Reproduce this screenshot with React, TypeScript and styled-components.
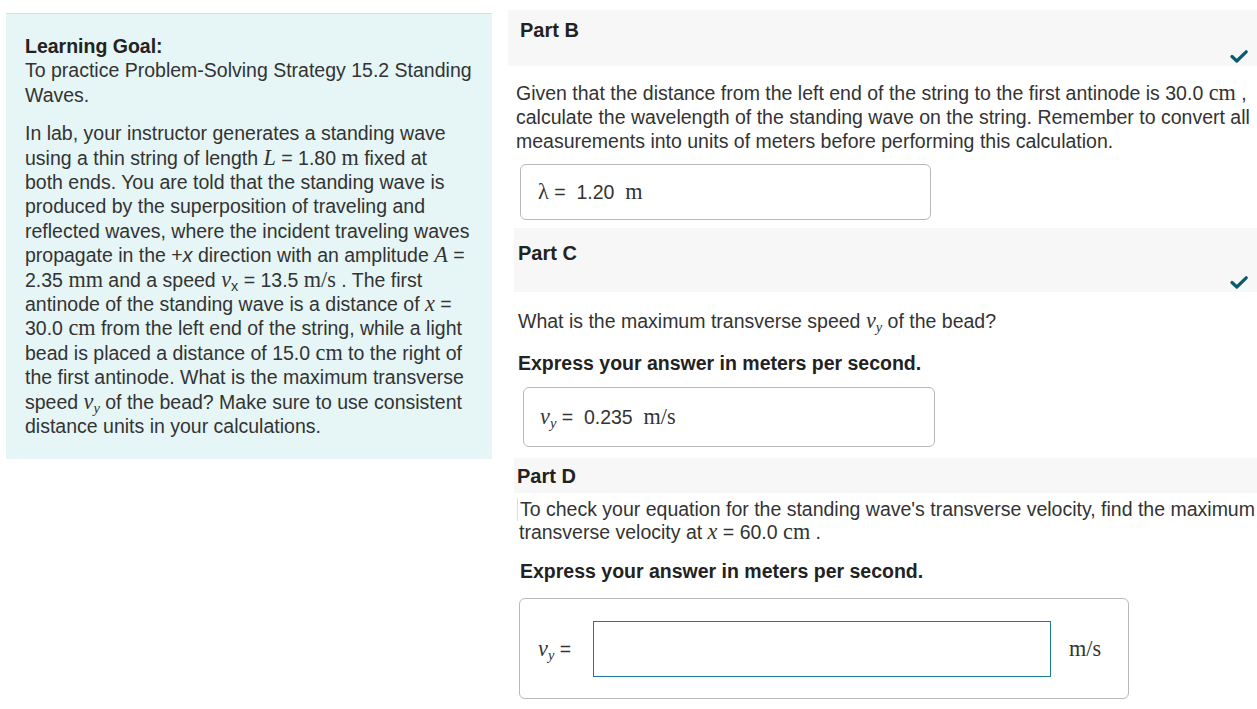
import React from 'react'
import styled, { createGlobalStyle } from 'styled-components'

const GlobalStyle = createGlobalStyle`
  body {
    margin: 0;
    background: #fff;
    font-family: "Liberation Sans", Arial, sans-serif;
    color: #333;
  }
`

const Page = styled.div`
  display: flex;
  align-items: flex-start;
  width: 1257px;
  height: 709px;
  overflow: hidden;
`

const GoalPanel = styled.div`
  margin: 13px 0 0 6px;
  width: 486px;
  flex-shrink: 0;
  box-sizing: border-box;
  padding: 20px 10px 20px 19px;
  background: #e6f5f6;
  border-top: 1px solid #dcdcdc;
  font-size: 19.5px;
  line-height: 24.4px;
  white-space: nowrap;
`

const GoalTitle = styled.div`
  font-weight: bold;
  color: #222;
`

const Para = styled.p<{ $top?: number }>`
  margin: ${p => p.$top ?? 0}px 0 0;
`

const Math = styled.span`
  font-family: "Liberation Serif", "Times New Roman", serif;
  font-size: 1.14em;
  line-height: 0;
`

const Var = styled(Math)`
  font-style: italic;
`

const Sub = styled.span<{ $italic?: boolean }>`
  position: relative;
  top: 0.28em;
  line-height: 0;
  font-size: 0.74em;
  font-style: ${p => (p.$italic ? 'italic' : 'normal')};
  font-family: ${p => (p.$italic ? '"Liberation Serif", serif' : '"Liberation Sans", sans-serif')};
`

const Column = styled.div`
  margin: 10px 0 0 16px;
  width: 749px;
  flex-shrink: 0;
  font-size: 19.5px;
  line-height: 24px;
`

const PartHead = styled.div<{ $h: number; $pt: number; $ml: number; $mt: number; $pl: number }>`
  display: flex;
  flex-direction: column;
  justify-content: space-between;
  box-sizing: border-box;
  height: ${p => p.$h}px;
  margin: ${p => p.$mt}px 0 0 ${p => p.$ml}px;
  padding: ${p => p.$pt}px 9px 3px ${p => p.$pl}px;
  background: #f7f7f7;
`

const PartTitle = styled.div`
  font-weight: bold;
  font-size: 20px;
  color: #222;
`

const Check = styled.svg`
  align-self: flex-end;
  width: 18px;
  height: 13px;
`

const Prompt = styled.div<{ $ml: number; $mt: number; $lh?: number }>`
  margin: ${p => p.$mt}px 0 0 ${p => p.$ml}px;
  line-height: ${p => p.$lh ?? 24}px;
  white-space: nowrap;
`

const Instruction = styled.div<{ $ml: number; $mt: number }>`
  margin: ${p => p.$mt}px 0 0 ${p => p.$ml}px;
  font-weight: bold;
  color: #222;
`

const AnswerBox = styled.div<{ $ml: number; $mt: number; $w: number; $h: number; $pl: number }>`
  display: flex;
  align-items: center;
  gap: 18px;
  box-sizing: border-box;
  margin: ${p => p.$mt}px 0 0 ${p => p.$ml}px;
  width: ${p => p.$w}px;
  height: ${p => p.$h}px;
  padding-left: ${p => p.$pl}px;
  border: 1px solid #b8b8b8;
  border-radius: 6px;
  background: #fff;
`

const Label = styled.span<{ $w?: number }>`
  white-space: nowrap;
  ${p => (p.$w ? `width: ${p.$w}px;` : '')}
`

const Input = styled.input`
  box-sizing: border-box;
  width: 458px;
  height: 56px;
  border: 1px solid #1b7c99;
  background: #fff;
  outline: none;
`

const Seam = styled.div`
  border-left: 1px solid #dedede;
  margin-left: -2px;
  padding-left: 2px;
`

const CheckMark = () => (
  <Check viewBox="0 0 18 13">
    <path d="M2 6.5 L6.8 11 L16.2 1.8" fill="none" stroke="#0b5b70" strokeWidth="3.2" strokeLinecap="round" strokeLinejoin="round" />
  </Check>
)

export default function App() {
  return (
    <Page>
      <GlobalStyle />
      <GoalPanel>
        <GoalTitle>Learning Goal:</GoalTitle>
        <div>To practice Problem-Solving Strategy 15.2 Standing</div>
        <div>Waves.</div>
        <Para $top={14}>
          In lab, your instructor generates a standing wave<br />
          using a thin string of length <Var>L</Var> = 1.80 <Math>m</Math> fixed at<br />
          both ends. You are told that the standing wave is<br />
          produced by the superposition of traveling and<br />
          reflected waves, where the incident traveling waves<br />
          propagate in the +<i>x</i> direction with an amplitude <Var>A</Var> =<br />
          2.35 <Math>mm</Math> and a speed <Var>v</Var><Sub>x</Sub> = 13.5 <Math>m/s</Math> . The first<br />
          antinode of the standing wave is a distance of <Var>x</Var> =<br />
          30.0 <Math>cm</Math> from the left end of the string, while a light<br />
          bead is placed a distance of 15.0 <Math>cm</Math> to the right of<br />
          the first antinode. What is the maximum transverse<br />
          speed <Var>v</Var><Sub $italic>y</Sub> of the bead? Make sure to use consistent<br />
          distance units in your calculations.
        </Para>
      </GoalPanel>

      <Column>
        <PartHead $h={56} $mt={0} $ml={0} $pt={8} $pl={12}>
          <PartTitle>Part B</PartTitle>
          <CheckMark />
        </PartHead>
        <Prompt $ml={8} $mt={15}>
          <div>Given that the distance from the left end of the string to the first antinode is 30.0 <Math>cm</Math> ,</div>
          <div>calculate the wavelength of the standing wave on the string. Remember to convert all</div>
          <div>measurements into units of meters before performing this calculation.</div>
        </Prompt>
        <AnswerBox $ml={12} $mt={11} $w={411} $h={56} $pl={17}>
          <Label><Math>λ</Math> = &nbsp;1.20 &nbsp;<Math>m</Math></Label>
        </AnswerBox>

        <PartHead $h={64} $mt={8} $ml={6} $pt={13} $pl={4}>
          <PartTitle>Part C</PartTitle>
          <CheckMark />
        </PartHead>
        <Prompt $ml={10} $mt={17}>
          What is the maximum transverse speed <Var>v</Var><Sub $italic>y</Sub> of the bead?
        </Prompt>
        <Instruction $ml={10} $mt={18}>Express your answer in meters per second.</Instruction>
        <AnswerBox $ml={15} $mt={12} $w={412} $h={60} $pl={16}>
          <Label><Var>v</Var><Sub $italic>y</Sub> = &nbsp;0.235 &nbsp;<Math>m/s</Math></Label>
        </AnswerBox>

        <PartHead $h={35} $mt={11} $ml={6} $pt={6} $pl={3}>
          <PartTitle>Part D</PartTitle>
        </PartHead>
        <Prompt $ml={11} $mt={5} $lh={23}>
          <Seam>To check your equation for the standing wave's transverse velocity, find the maximum</Seam>
          <div>transverse velocity at <Var>x</Var> = 60.0 <Math>cm</Math> .</div>
        </Prompt>
        <Instruction $ml={12} $mt={15}>Express your answer in meters per second.</Instruction>
        <AnswerBox $ml={11} $mt={15} $w={610} $h={101} $pl={18}>
          <Label $w={37}><Var>v</Var><Sub $italic>y</Sub> =</Label>
          <Input aria-label="answer" />
          <Math>m/s</Math>
        </AnswerBox>
      </Column>
    </Page>
  )
}
